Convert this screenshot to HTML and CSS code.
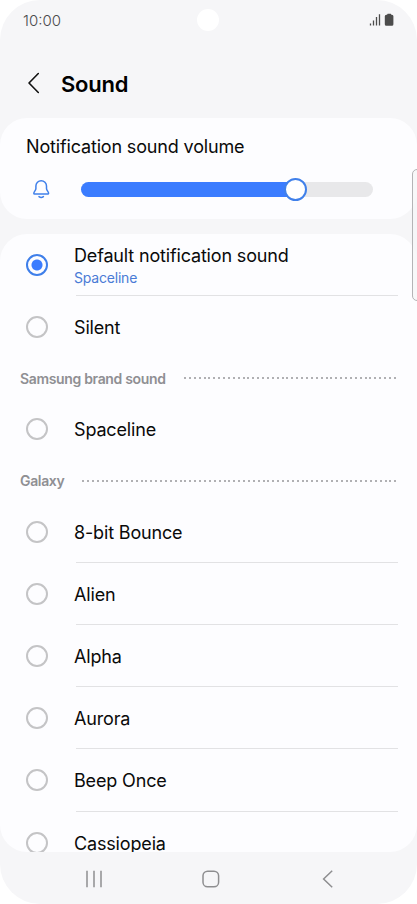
FILE: index.html
```html
<!DOCTYPE html>
<html lang="en">
<head>
    <meta charset="UTF-8">
    <meta name="viewport" content="width=device-width, initial-scale=1.0">
    <title>Sound</title>
    <link rel="stylesheet" href="styles.css">
</head>
<body>
    <div class="phone">
        <div class="camera"></div>

        <div class="status-bar">
            <span class="time">10:00</span>
            <svg class="status-icons" width="26" height="14" viewBox="0 0 26 14">
                <path d="M1.5 12.4V10.4M4.5 12.4V7.4M7.5 12.4V4M10.5 12.4V1.2" stroke="#4c4c4c" stroke-width="1.3" fill="none"/>
                <path d="M18.2 1.8V1.4Q18.2.8 18.8.8H21.6Q22.2.8 22.2 1.4V1.8H22.9Q24.4 1.8 24.4 3.3V11.3Q24.4 12.8 22.9 12.8H17.3Q15.8 12.8 15.8 11.3V3.3Q15.8 1.8 17.3 1.8Z" fill="#4c4c4c"/>
            </svg>
        </div>

        <header class="header">
            <svg class="back" width="14" height="22" viewBox="0 0 14 22">
                <path d="M11.3 1.5L2 11L11.3 20.5" fill="none" stroke="#111" stroke-width="1.6" stroke-linecap="round" stroke-linejoin="round"/>
            </svg>
            <h1>Sound</h1>
        </header>

        <section class="card volume">
            <div class="volume-title">Notification sound volume</div>
            <div class="volume-row">
                <svg class="bell" width="18" height="20" viewBox="0 0 18 20">
                    <path d="M3.9 7A5.3 5.3 0 0 1 14.5 7V9.4C14.5 11.4 16.6 12.6 16.6 14.2Q16.6 15 15.8 15H2.6Q1.8 15 1.8 14.2C1.8 12.6 3.9 11.4 3.9 9.4Z" fill="none" stroke="#4080ea" stroke-width="1.5"/>
                    <path d="M7 17.6Q9.2 19.2 11.4 17.6" fill="none" stroke="#4080ea" stroke-width="1.5" stroke-linecap="round"/>
                </svg>
                <div class="slider">
                    <div class="slider-fill"></div>
                    <div class="slider-thumb"></div>
                </div>
            </div>
        </section>

        <section class="card list">
            <div class="item">
                <span class="radio checked"></span>
                <div class="item-body line first">
                    <span>Default notification sound</span>
                    <span class="sub">Spaceline</span>
                </div>
            </div>
            <div class="item">
                <span class="radio"></span>
                <div class="item-body">Silent</div>
            </div>
            <div class="group"><span>Samsung brand sound</span><i class="dots"></i></div>
            <div class="item">
                <span class="radio"></span>
                <div class="item-body">Spaceline</div>
            </div>
            <div class="group"><span>Galaxy</span><i class="dots"></i></div>
            <div class="item">
                <span class="radio"></span>
                <div class="item-body line">8-bit Bounce</div>
            </div>
            <div class="item">
                <span class="radio"></span>
                <div class="item-body line">Alien</div>
            </div>
            <div class="item">
                <span class="radio"></span>
                <div class="item-body line">Alpha</div>
            </div>
            <div class="item">
                <span class="radio"></span>
                <div class="item-body line">Aurora</div>
            </div>
            <div class="item">
                <span class="radio"></span>
                <div class="item-body line">Beep Once</div>
            </div>
            <div class="item">
                <span class="radio"></span>
                <div class="item-body">Cassiopeia</div>
            </div>
        </section>

        <nav class="nav">
            <svg width="18" height="18" viewBox="0 0 18 18">
                <path d="M2 .7V17.3M9 .7V17.3M16 .7V17.3" stroke="#8e8e90" stroke-width="1.5" fill="none"/>
            </svg>
            <svg width="18" height="18" viewBox="0 0 18 18">
                <rect x="1" y="1.2" width="15.6" height="15.6" rx="4.6" stroke="#8e8e90" stroke-width="1.5" fill="none"/>
            </svg>
            <svg width="18" height="18" viewBox="0 0 18 18">
                <path d="M13.2 .8L4.6 9L13.2 17.2" stroke="#8e8e90" stroke-width="1.5" fill="none"/>
            </svg>
        </nav>

        <div class="edge-handle"></div>
    </div>
</body>
</html>
```

FILE: styles.css
```css
* {
    box-sizing: border-box;
}

body {
    margin: 0;
    background-color: #fff;
    font-family: Inter, "Liberation Sans", sans-serif;
    color: #0a0a0a;
}

.phone {
    position: relative;
    display: flex;
    flex-direction: column;
    width: 417px;
    height: 904px;
    overflow: hidden;
    background-color: #f6f6f8;
    border-radius: 40px;
}

.camera {
    position: absolute;
    top: 9px;
    left: 197px;
    width: 22px;
    height: 22px;
    border-radius: 50%;
    background-color: #fff;
}

.status-bar {
    display: flex;
    justify-content: space-between;
    align-items: center;
    height: 40px;
    padding: 0 22px 0 23px;
}

.time {
    font-size: 15px;
    font-weight: 300;
    color: #4a4a4c;
}

.header {
    display: flex;
    align-items: center;
    gap: 20px;
    height: 78px;
    padding: 0 27px 0 27px;
}

.back {
    margin-top: 8px;
}

h1 {
    margin: 9px 0 0;
    font-size: 22px;
    font-weight: 600;
    letter-spacing: -0.2px;
    color: #000;
}

.card {
    background-color: #fdfdff;
    border-radius: 27px;
}

.volume {
    height: 101px;
    padding: 17px 44px 0 26px;
    margin-bottom: 15px;
}

.volume-title {
    font-size: 18px;
    line-height: 24px;
    letter-spacing: -0.16px;
}

.volume-row {
    display: flex;
    align-items: center;
    gap: 31px;
    height: 30px;
    margin-top: 15px;
    padding-left: 6px;
}

.slider {
    position: relative;
    flex: 1;
    height: 15px;
    border-radius: 8px;
    background-color: #e8e8ea;
}

.slider-fill {
    width: 214px;
    height: 15px;
    border-radius: 8px;
    background-color: #3b7cff;
}

.slider-thumb {
    position: absolute;
    top: -4px;
    left: 203px;
    width: 23px;
    height: 23px;
    border: 2px solid #4080ea;
    border-radius: 50%;
    background-color: #fff;
}

.list {
    height: 618px;
    overflow: hidden;
}

.item {
    display: flex;
    align-items: center;
    gap: 26px;
    height: 62.2px;
    padding: 0 19px 0 26px;
}

.radio {
    flex: none;
    width: 22px;
    height: 22px;
    border: 2px solid #c4c4c6;
    border-radius: 50%;
}

.radio.checked {
    border-color: #3f7fea;
    background: radial-gradient(circle, #3b7cff 5px, transparent 6px);
}

.item-body {
    display: flex;
    flex: 1;
    flex-direction: column;
    justify-content: center;
    height: 100%;
    padding-top: 2px;
    font-size: 18px;
    line-height: 24px;
    letter-spacing: -0.16px;
}

.item-body.first {
    padding-top: 0;
}

.line {
    background: linear-gradient(#e2e2e4, #e2e2e4) 2px 100% / 100% 1px no-repeat;
}

.sub {
    font-size: 14px;
    line-height: 19px;
    letter-spacing: -0.2px;
    color: #4a7bd6;
}

.group {
    display: flex;
    align-items: center;
    gap: 18px;
    height: 40px;
    padding: 0 20px 0 20px;
    font-size: 14px;
    font-weight: 600;
    letter-spacing: -0.34px;
    color: #8f8f93;
}

.dots {
    flex: 1;
    height: 2px;
    background: repeating-linear-gradient(90deg, #b0b0b3 0 2px, transparent 2px 4.88px);
}

.nav {
    display: flex;
    align-items: center;
    justify-content: space-between;
    height: 52px;
    padding: 2px 80px 0 85px;
}

.edge-handle {
    position: absolute;
    top: 169px;
    right: -6px;
    width: 11px;
    height: 132px;
    border: 1px solid #b4b4b6;
    border-radius: 5px;
    background-color: rgba(246, 246, 248, 0.8);
}
```
